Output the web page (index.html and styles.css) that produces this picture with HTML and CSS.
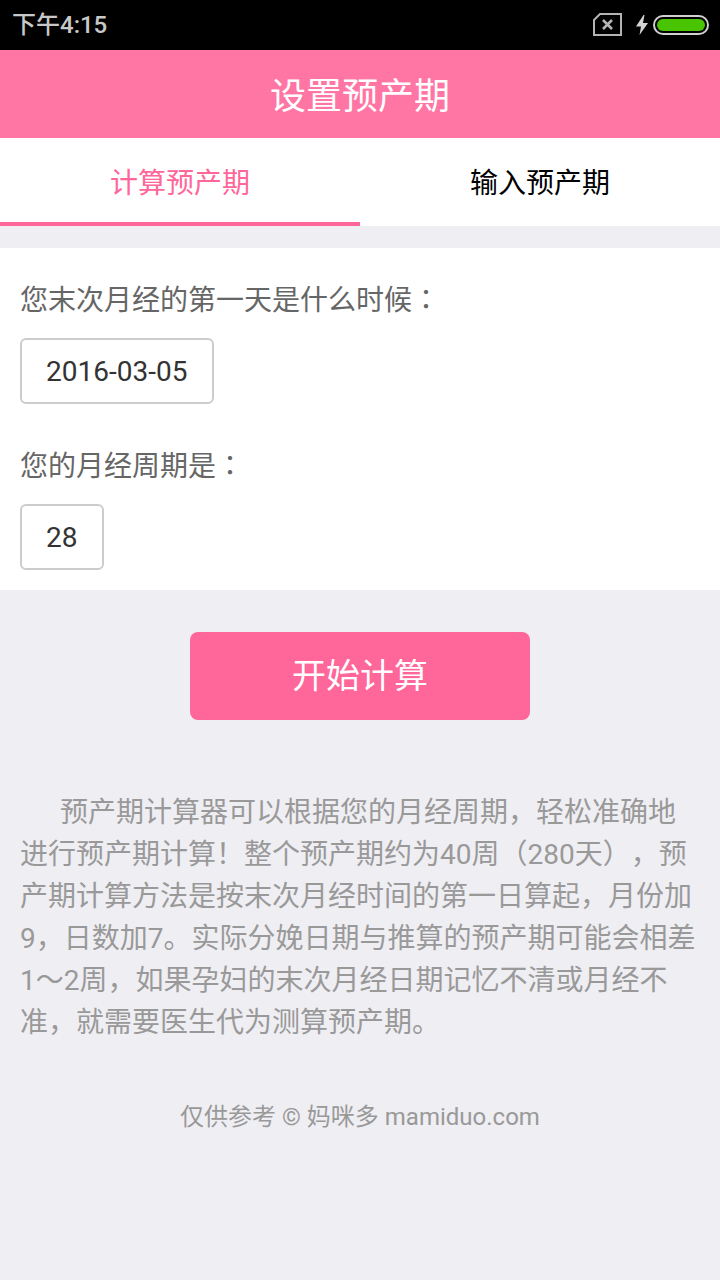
FILE: index.html
```html
<!DOCTYPE html>
<html lang="zh-CN">
<head>
<meta charset="utf-8">
<meta name="viewport" content="width=device-width, initial-scale=1">
<title>设置预产期</title>
<link rel="stylesheet" href="styles.css">
</head>
<body>
<div class="status-bar">
  <span class="status-time">下午4:15</span>
  <div class="status-icons">
    <svg class="icon-sim" viewBox="0 0 30 24" width="30" height="24" aria-hidden="true">
      <path d="M8 1H29V22H2V7Z" fill="none" stroke="#b4b4b4" stroke-width="2"/>
      <path d="M11 7L20 16M20 7L11 16" fill="none" stroke="#b4b4b4" stroke-width="2.600"/>
    </svg>
    <svg class="icon-bolt" viewBox="0 0 12 20" width="12" height="20" aria-hidden="true">
      <path d="M7.500 0L0 11.500H5L3.500 20L12 8H7L8.500 0Z" fill="#d4d4d4"/>
    </svg>
    <svg class="icon-battery" viewBox="0 0 56 20" width="56" height="20" aria-hidden="true">
      <rect x="1" y="1" width="54" height="18" rx="9" fill="none" stroke="#d0d0d0" stroke-width="2"/>
      <rect x="4" y="4" width="48" height="12" rx="6" fill="#48c400"/>
    </svg>
  </div>
</div>
<header class="title-bar"><h1 class="title">设置预产期</h1></header>
<nav class="tabs">
  <button class="tab tab-active" type="button">计算预产期</button>
  <button class="tab" type="button">输入预产期</button>
</nav>
<form class="form">
  <div class="card">
    <div class="field">
      <label class="label" for="last-date">您末次月经的第一天是什么时候<span lang="zh-TW">：</span></label>
      <input class="input input-date" id="last-date" type="text" value="2016-03-05" readonly>
    </div>
    <div class="field">
      <label class="label" for="cycle">您的月经周期是<span lang="zh-TW">：</span></label>
      <input class="input input-cycle" id="cycle" type="text" inputmode="numeric" value="28">
    </div>
  </div>
  <button class="submit" type="button">开始计算</button>
</form>
<p class="intro">预产期计算器可以根据您的月经周期，轻松准确地进行预产期计算！整个预产期约为40周（280天），预产期计算方法是按末次月经时间的第一日算起，月份加9，日数加7。实际分娩日期与推算的预产期可能会相差1～2周，如果孕妇的末次月经日期记忆不清或月经不准，就需要医生代为测算预产期。</p>
<footer class="footer">仅供参考 © 妈咪多 mamiduo.com</footer>
</body>
</html>
```
FILE: styles.css
```css
* {
  box-sizing: border-box;
}

body {
  margin: 0;
  min-height: 100vh;
  background: #efeef3;
  color: #666;
  font-family: Roboto, "Noto Sans CJK SC", sans-serif;
  font-size: 28px;
  line-height: 42px;
  text-spacing-trim: space-all;
}

button,
input {
  font: inherit;
}

.status-bar {
  display: flex;
  align-items: center;
  justify-content: space-between;
  height: 50px;
  padding: 0 11px 0 12px;
  background: #000;
}

.status-time {
  color: #c8c8c8;
  font-size: 24px;
  font-weight: 500;
}

.status-icons {
  display: flex;
  align-items: center;
}

.icon-bolt {
  margin: 0 5px 0 14px;
}

.title-bar {
  display: flex;
  align-items: center;
  justify-content: center;
  height: 88px;
  padding-top: 6px;
  background: #ff75a3;
}

.title {
  margin: 0;
  color: #fff;
  font-size: 36px;
  font-weight: 400;
}

.tabs {
  display: grid;
  grid-template-columns: 1fr 1fr;
  background: #fff;
}

.tab {
  height: 88px;
  padding: 8px 0 0;
  border: 0;
  border-bottom: 4px solid transparent;
  background: none;
  color: #000;
}

.tab-active {
  border-bottom-color: #ff6699;
  color: #ff6699;
}

.card {
  display: flex;
  flex-direction: column;
  gap: 42px;
  margin-top: 22px;
  padding: 32px 20px 20px;
  background: #fff;
}

.field {
  display: flex;
  flex-direction: column;
  align-items: flex-start;
  gap: 16px;
}

.label {
  display: block;
}

.input {
  height: 66px;
  padding: 0 24px;
  border: 2px solid #ccc;
  border-radius: 6px;
  background: #fff;
  color: #333;
}

.input-date {
  width: 194px;
}

.input-cycle {
  width: 84px;
}

.submit {
  display: block;
  width: 340px;
  height: 88px;
  margin: 42px auto 0;
  padding: 0;
  border: 0;
  border-radius: 8px;
  background: #ff6699;
  color: #fff;
  font-size: 34px;
}

.intro {
  margin: 72px 0 0;
  padding: 0 20px;
  color: #999;
  text-indent: 40px;
}

.footer {
  margin-top: 52px;
  color: #999;
  font-size: 24px;
  text-align: center;
}
```
